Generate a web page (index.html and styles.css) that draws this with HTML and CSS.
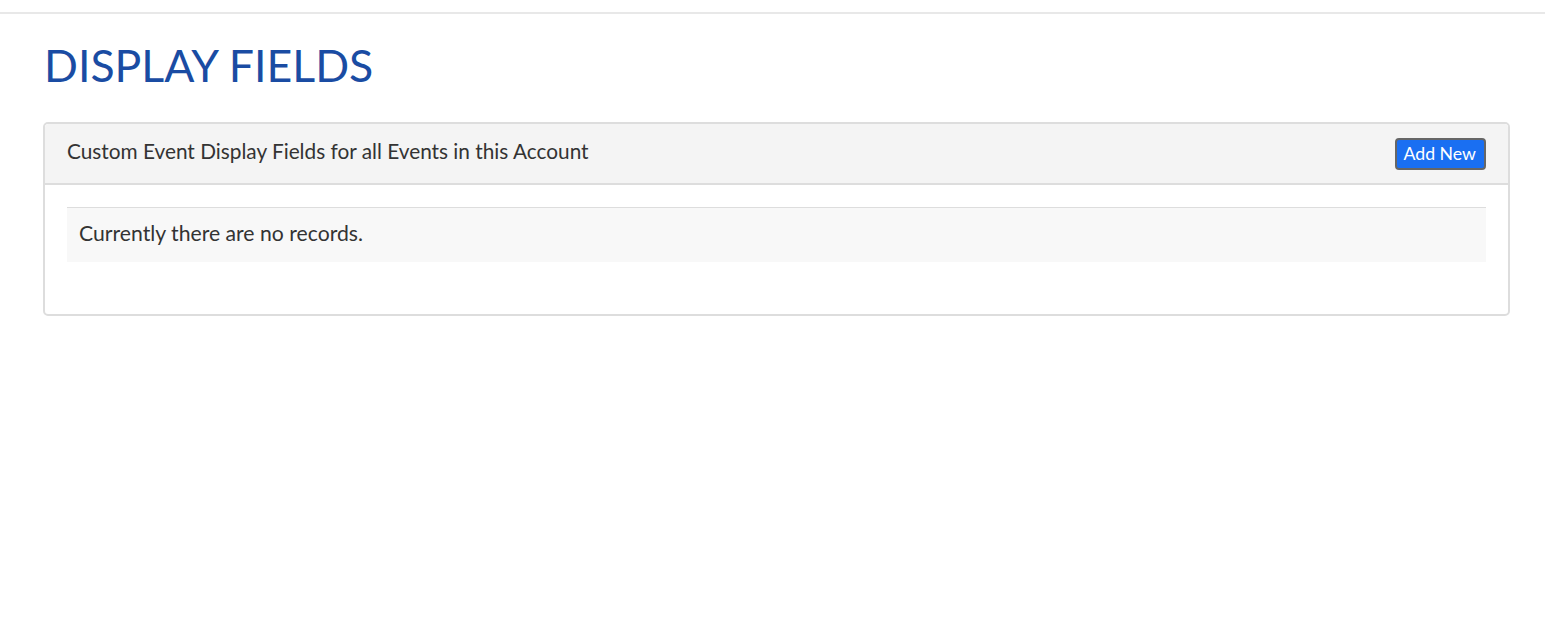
FILE: index.html
```html
<!DOCTYPE html>
<html lang="en">
<head>
    <meta charset="UTF-8">
    <meta name="viewport" content="width=device-width, initial-scale=1.0">
    <title>Display Fields</title>
    <link rel="stylesheet" href="styles.css">
</head>
<body>
    <div class="topbar"></div>
    <div class="page">
        <h1 class="page-title">DISPLAY FIELDS</h1>

        <div class="panel">
            <div class="panel-heading">
                <span class="panel-title">Custom Event Display Fields for all Events in this Account</span>
                <button class="btn-add" type="button">Add New</button>
            </div>
            <div class="panel-body">
                <div class="empty-row">Currently there are no records.</div>
            </div>
        </div>
    </div>
</body>
</html>
```

FILE: styles.css
```css
body {
    font-family: Lato, 'Open Sans', sans-serif;
    margin: 0;
    padding: 0;
    background: #fff;
    color: #333;
}
.topbar {
    height: 12px;
    border-bottom: 2px solid #e8e8e8;
}
.page {
    padding: 0 35px 0 43px;
}
.page-title {
    margin: 26px 1px 32px 1px;
    font-size: 44.6px;
    font-weight: 400;
    line-height: 50px;
    color: #1a4ca3;
}
.panel {
    border: 2px solid #dddddd;
    border-radius: 5px;
}
.panel-heading {
    display: flex;
    align-items: center;
    justify-content: space-between;
    height: 59px;
    padding: 0 22px 0 22px;
    background: #f4f4f4;
    border-bottom: 2px solid #dddddd;
    border-radius: 4px 4px 0 0;
}
.panel-title {
    font-size: 20.8px;
    margin-bottom: 6px;
}
.btn-add {
    font-family: Lato, sans-serif;
    font-size: 17.7px;
    color: #fff;
    background: #1a6ff2;
    border: 2px solid #666;
    border-radius: 4px;
    padding: 2px 8px 3px 7px;
    line-height: 23px;
}
.panel-body {
    padding: 22px 22px 52px 22px;
}
.empty-row {
    background: #f8f8f8;
    border-top: 1px solid #dddddd;
    padding: 0 12px 4px;
    height: 50px;
    line-height: 50px;
    font-size: 21.2px;
}
```
